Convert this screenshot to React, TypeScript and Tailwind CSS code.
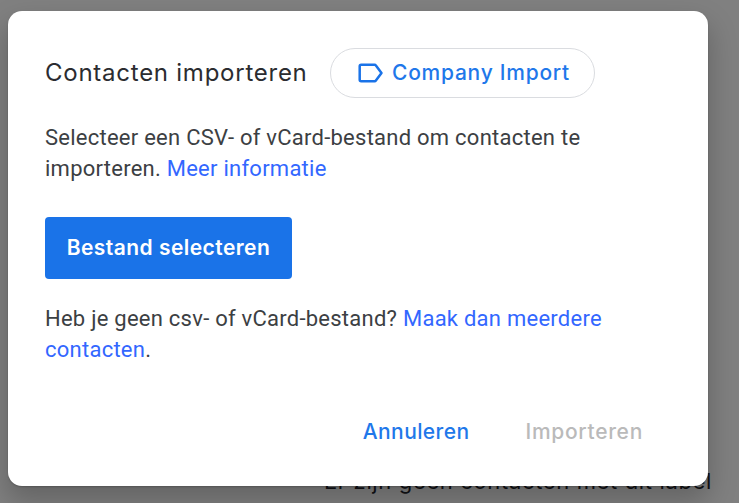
import React from 'react';

const LabelIcon = () => (
  <svg width="26" height="20" viewBox="0 0 26 20" fill="none" className="shrink-0">
    <path
      d="M3.2 1.8h13.4a1.6 1.6 0 0 1 1.3.7L23.5 10l-5.6 7.5a1.6 1.6 0 0 1-1.3.7H3.2A1.5 1.5 0 0 1 1.7 16.7V3.3A1.5 1.5 0 0 1 3.2 1.8z"
      stroke="#1a73e8"
      strokeWidth="2.5"
      strokeLinejoin="round"
    />
  </svg>
);

export default function App() {
  return (
    <div className="relative h-[503px] w-[739px] overflow-hidden bg-[#808080] font-['Inter',sans-serif]">
      {/* Page behind the dialog */}
      <p className="absolute top-[466px] left-[324px] whitespace-nowrap text-[22px] leading-[30px] tracking-[0.64px] text-[#111216]">
        Er zijn geen contacten met dit label
      </p>

      {/* Dialog */}
      <div
        role="dialog"
        className="absolute top-[11px] left-2 flex h-[475px] w-[700px] flex-col rounded-[14px] bg-white px-[37px] pt-[37px] shadow-[0_14px_28px_2px_rgba(0,0,0,0.22),0_1px_2px_rgba(0,0,0,0.2)]"
      >
        <header className="flex h-[50px] items-center">
          <h1 className="w-[285px] shrink-0 whitespace-nowrap text-[24px] font-normal tracking-[0.75px] text-[#2b2c30]">
            Contacten importeren
          </h1>
          <button className="flex h-[50px] w-[265px] shrink-0 items-center gap-2 rounded-full border-[1.5px] border-[#dadce0] pb-px pl-[27px] whitespace-nowrap text-[21px] font-medium tracking-[0.75px] text-[#1f78ea]">
            <LabelIcon />
            Company Import
          </button>
        </header>

        <p className="mt-6 font-['Roboto',sans-serif] text-[22px] leading-[31px] tracking-[0.25px] text-[#3c4043]">
          Selecteer een CSV- of vCard-bestand om contacten te
          <br />
          importeren. <a className="text-[#3367ff]">Meer informatie</a>
        </p>

        <button className="mt-[33px] h-[62px] w-[247px] rounded-[4px] bg-[#1a73e8] pb-px whitespace-nowrap text-[21px] font-semibold tracking-[0.45px] text-white">
          Bestand selecteren
        </button>

        <p className="mt-6 font-['Roboto',sans-serif] text-[22px] leading-[31px] tracking-[0.25px] text-[#3c4043]">
          Heb je geen csv- of vCard-bestand? <a className="text-[#3367ff]">Maak dan meerdere</a>
          <br />
          <a className="text-[#3367ff]">contacten</a>.
        </p>

        <footer className="mt-[51px] flex justify-end gap-[56px] pr-[28px] text-[21px] leading-[32px] font-medium">
          <button className="tracking-[0.4px] text-[#1f78ea]">Annuleren</button>
          <button className="tracking-[0.7px] text-[#bababa]" disabled>
            Importeren
          </button>
        </footer>
      </div>
    </div>
  );
}
